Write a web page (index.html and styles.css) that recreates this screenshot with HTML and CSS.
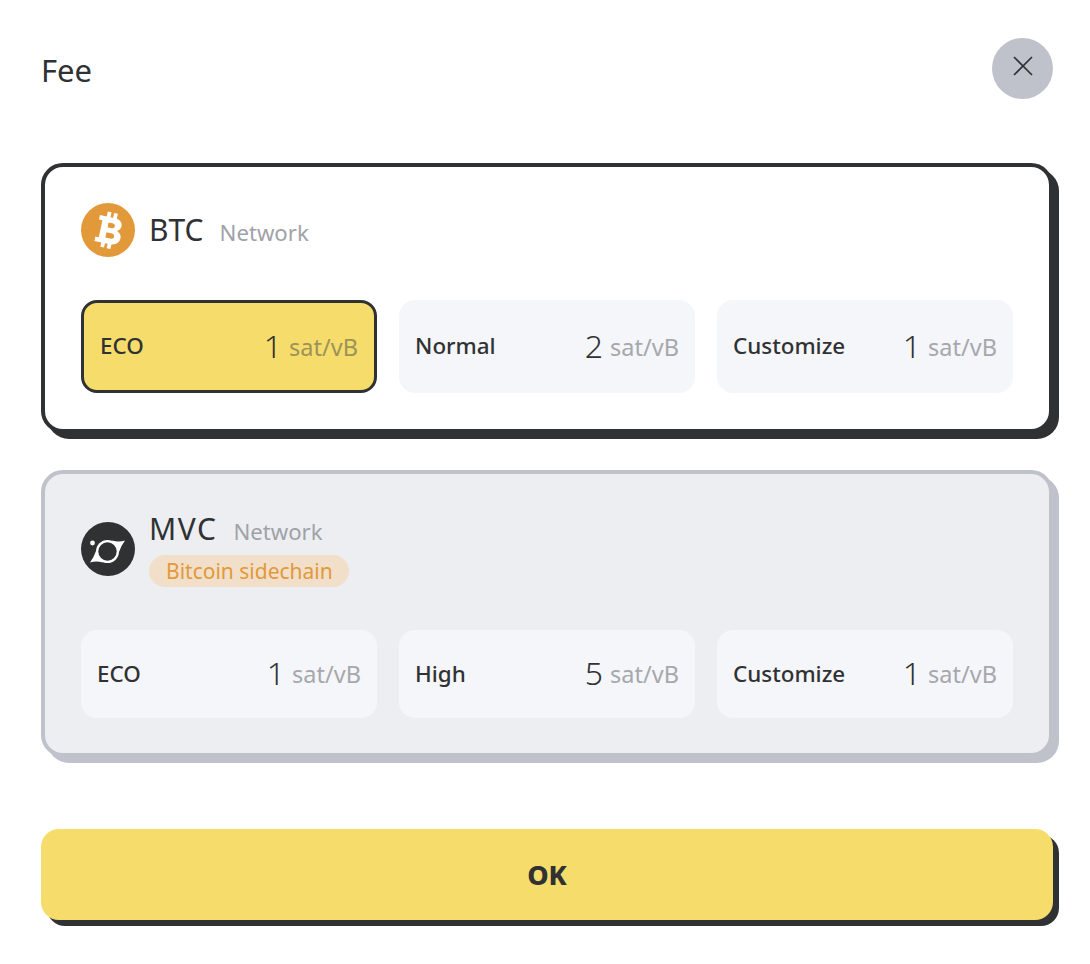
FILE: index.html
```html
<!DOCTYPE html>
<html lang="en">
<head>
<meta charset="utf-8">
<title>Fee</title>
<link rel="stylesheet" href="styles.css">
</head>
<body>
<main class="dialog">
  <header class="head">
    <h1 class="title">Fee</h1>
    <button class="close" aria-label="Close">
      <svg width="20" height="20" viewBox="0 0 20 20"><path d="M1 1L19 19M19 1L1 19" stroke="#303133" stroke-width="1.7" fill="none"/></svg>
    </button>
  </header>

  <section class="card card-active">
    <div class="net">
      <svg class="coin" viewBox="0 0 54 54">
        <circle cx="27" cy="27" r="27" fill="#e2993a"/>
        <g transform="rotate(12 27 27)" fill="#fff">
          <rect x="23" y="9" width="3.800" height="7"/><rect x="29.500" y="9" width="3.800" height="7"/>
          <rect x="23" y="38" width="3.800" height="7"/><rect x="29.500" y="38" width="3.800" height="7"/>
          <path fill-rule="evenodd" d="M16 14H31.500C37 14 39.500 17.300 39.500 20.500C39.500 23 38 25 36 26C39 27 41 29.500 41 32.500C41 37 37.500 40.500 32 40.500H16V36H19.500V18.500H16ZM26 19.500V24.500H30C31.800 24.500 33 23.500 33 22C33 20.500 31.800 19.500 30 19.500ZM26 29.500V35H30.800C33 35 34.300 34 34.300 32.300C34.300 30.600 33 29.500 30.800 29.500Z"/>
        </g>
      </svg>
      <div class="net-text">
        <div class="net-line"><span class="net-name">BTC</span><span class="net-sub">Network</span></div>
      </div>
    </div>
    <div class="options options-tall">
      <div class="option option-selected"><span class="opt-label">ECO</span><span class="opt-value"><span class="num">1</span> <span class="unit">sat/vB</span></span></div>
      <div class="option"><span class="opt-label">Normal</span><span class="opt-value"><span class="num">2</span> <span class="unit">sat/vB</span></span></div>
      <div class="option"><span class="opt-label">Customize</span><span class="opt-value"><span class="num">1</span> <span class="unit">sat/vB</span></span></div>
    </div>
  </section>

  <section class="card card-idle">
    <div class="net">
      <svg class="coin" viewBox="0 0 54 54">
        <circle cx="27" cy="27" r="27" fill="#303133"/>
        <path d="M31 18.500Q38 20.500 44 18.500Q40.500 23 38 30Z" fill="#fff"/>
        <path d="M22 40.500Q15 38.500 9 40.500Q12.500 36 15 29Z" fill="#fff"/>
        <circle cx="26.500" cy="29.500" r="11.500" fill="#fff"/>
        <circle cx="26.500" cy="29.500" r="9.200" fill="#303133"/>
        <circle cx="11.500" cy="21" r="2.400" fill="#fff"/>
      </svg>
      <div class="net-text">
        <div class="net-line net-line-tagged"><span class="net-name net-name-wide">MVC</span><span class="net-sub">Network</span></div>
        <span class="tag">Bitcoin sidechain</span>
      </div>
    </div>
    <div class="options">
      <div class="option"><span class="opt-label">ECO</span><span class="opt-value"><span class="num">1</span> <span class="unit">sat/vB</span></span></div>
      <div class="option"><span class="opt-label">High</span><span class="opt-value"><span class="num">5</span> <span class="unit">sat/vB</span></span></div>
      <div class="option"><span class="opt-label">Customize</span><span class="opt-value"><span class="num">1</span> <span class="unit">sat/vB</span></span></div>
    </div>
  </section>

  <button class="ok">OK</button>
</main>
</body>
</html>
```
FILE: styles.css
```css
* { box-sizing: border-box; }
html, body { margin: 0; background: #fff; }
body { font-family: "Noto Sans", "Open Sans", sans-serif; color: #303133; }
.dialog { width: 1090px; height: 964px; padding: 38px 37px 0 41px; display: flex; flex-direction: column; }
.head { display: flex; justify-content: space-between; align-items: flex-start; height: 62px; margin-bottom: 63px; }
.title { margin: 0; font-size: 31px; font-weight: 400; line-height: 64px; }
.close { width: 61px; height: 61px; border: 0; border-radius: 50%; background: #bfc2cb; display: flex; align-items: center; justify-content: center; padding: 0 0 5px; }
.card { width: 1012px; border-radius: 22px; padding: 0 36px; border: 4px solid; }
.card-active { height: 270px; background: #fff; border-color: #303133; box-shadow: 6px 6px 0 #303133; padding-top: 36px; margin-bottom: 37px; }
.card-idle { height: 287px; background: #edeef2; border-color: #bfc2cb; box-shadow: 6px 6px 0 #bfc2cb; padding-top: 36px; margin-bottom: 72px; }
.net { display: flex; align-items: center; gap: 14px; }
.coin { width: 54px; height: 54px; flex: none; }
.net-text { display: flex; flex-direction: column; align-items: flex-start; }
.net-line { display: flex; align-items: baseline; gap: 16px; height: 38px; line-height: 38px; }
.net-line-tagged { margin-bottom: 7px; }
.net-name { font-size: 30px; }
.net-name-wide { letter-spacing: 1.5px; }
.net-sub { font-size: 22.2px; color: #a0a2a7; }
.tag { display: block; height: 32px; line-height: 32px; padding: 0 16px 0 17px; border-radius: 16px; background: #f1dfc9; color: #e2993a; font-size: 21px; }
.options { display: grid; grid-template-columns: repeat(3, 296px); gap: 22px; margin-top: 43px; }
.options-tall .option { height: 93px; }
.option { height: 88px; border-radius: 16px; background: #f5f6f9; display: flex; align-items: center; justify-content: space-between; padding: 0 16px; }
.option-selected { background: #f6dc6b; border: 3px solid #303133; }
.opt-label { font-size: 22.4px; font-weight: 500; margin-bottom: 2px; }
.opt-value { display: flex; align-items: flex-end; gap: 7px; margin-bottom: 2px; }
.num { font-size: 32px; font-weight: 300; line-height: 40px; }
.unit { font-size: 23.5px; line-height: 38px; color: #a6a8ad; }
.option-selected .unit { color: #9c9358; }
.ok { width: 1012px; height: 91px; border: 0; border-radius: 18px; background: #f6dc6b; box-shadow: 6px 6px 0 #303133; color: #303133; font-family: inherit; font-size: 27px; font-weight: 800; }
```
